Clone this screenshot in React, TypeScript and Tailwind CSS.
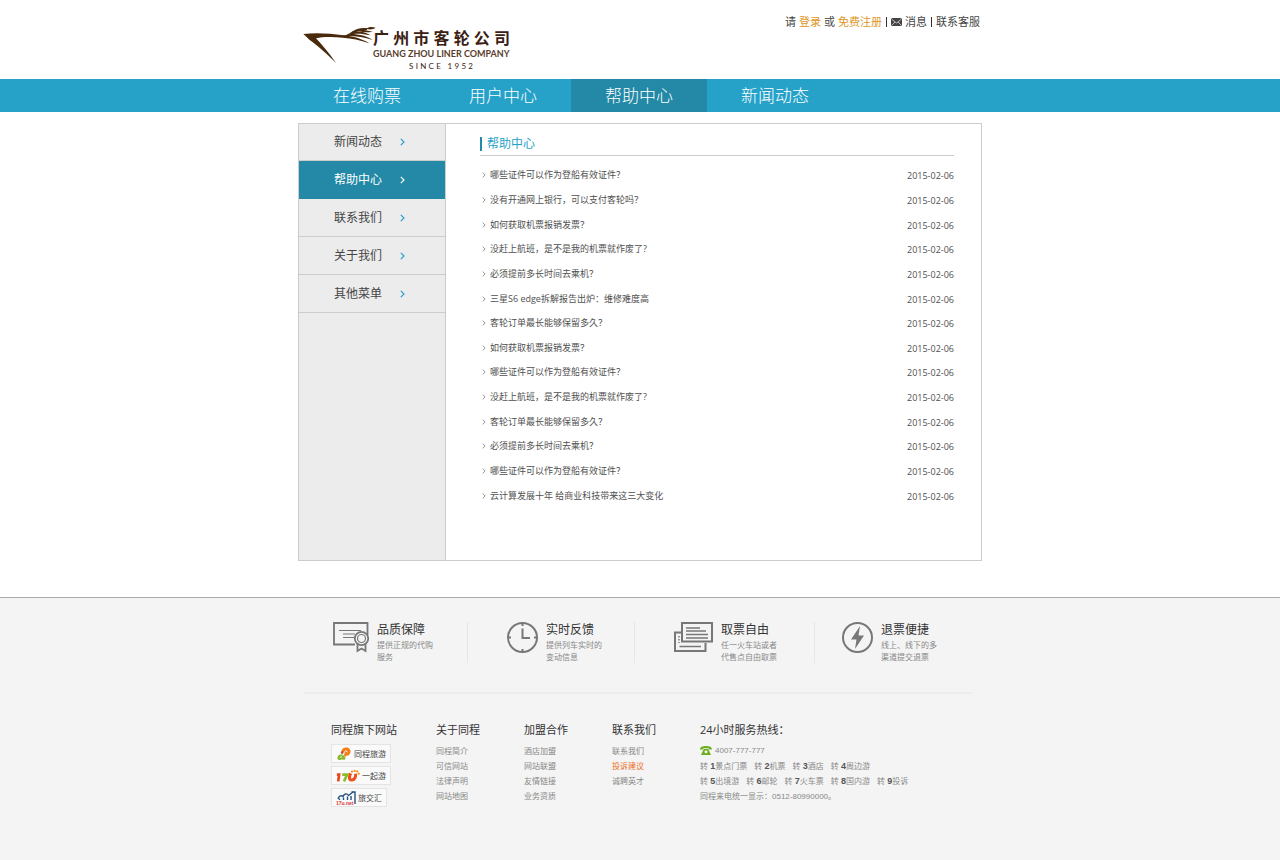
import { useState } from 'react';
import type { ReactNode } from 'react';

const NAV = ['在线购票', '用户中心', '帮助中心', '新闻动态'];

const SIDE_MENU = ['新闻动态', '帮助中心', '联系我们', '关于我们', '其他菜单'];

const ARTICLES = [
  '哪些证件可以作为登船有效证件？',
  '没有开通网上银行，可以支付客轮吗？',
  '如何获取机票报销发票？',
  '没赶上航班，是不是我的机票就作废了?',
  '必须提前多长时间去乘机？',
  '三星S6 edge拆解报告出炉：维修难度高',
  '客轮订单最长能够保留多久？',
  '如何获取机票报销发票？',
  '哪些证件可以作为登船有效证件？',
  '没赶上航班，是不是我的机票就作废了?',
  '客轮订单最长能够保留多久？',
  '必须提前多长时间去乘机？',
  '哪些证件可以作为登船有效证件？',
  '云计算发展十年 给商业科技带来这三大变化',
].map((title) => ({ title, date: '2015-02-06' }));

const LINK_COLUMNS = [
  { title: '关于同程', links: ['同程简介', '可信网站', '法律声明', '网站地图'] },
  { title: '加盟合作', links: ['酒店加盟', '网站联盟', '友情链接', '业务资质'] },
  { title: '联系我们', links: ['联系我们', '投诉建议', '诚聘英才'] },
];

const HOTLINE = [
  [['1', '景点门票'], ['2', '机票'], ['3', '酒店'], ['4', '周边游']],
  [['5', '出境游'], ['6', '邮轮'], ['7', '火车票'], ['8', '国内游'], ['9', '投诉']],
];

function Chevron({ className }: { className: string }) {
  return (
    <svg viewBox="0 0 5 8" fill="none" stroke="currentColor" strokeWidth="1.2" className={className}>
      <path d="M0.8 0.8 4 4 0.8 7.2" />
    </svg>
  );
}

function Spread({ text, className }: { text: string; className: string }) {
  return (
    <span className={`flex justify-between ${className}`}>
      {Array.from(text).map((c, i) => <span key={i} className="whitespace-pre">{c}</span>)}
    </span>
  );
}

function Logo() {
  return (
    <a href="#" className="flex text-[#3b2113]">
      <svg viewBox="36 50 213 114" className="h-[38px] w-[71px] overflow-visible" fill="#4a2a0c">
        <path d="M40 74C75 70 120 72 160 78 190 81 215 88 238 102 210 92 185 87 158 85 125 82 95 83 78 87 95 106 118 131 138 161 112 134 82 108 58 91 52 85 46 80 40 74Z" />
        <path d="M156 80C172 78 178 72 188 66 202 57 216 55 232 57L231 62C216 61 206 63 198 68 186 77 176 84 164 83Z" />
        <path d="M186 67C204 64 224 67 242 78 222 74 206 72 190 74Z" />
        <path d="M178 74C204 73 232 80 248 92 228 86 206 81 182 80Z" />
        <path d="M208 60C220 62 234 64 248 67 232 70 220 69 206 65Z" />
        <path d="M229 58C236 51 248 52 257 55 250 60 240 62 229 58Z" />
      </svg>
      <span className="flex w-[137px] flex-col">
        <Spread text="广州市客轮公司" className="text-[16px] leading-6 font-bold" />
        <span className="font-['Lato'] text-[9px] leading-[8px] font-bold whitespace-nowrap text-[#5a3d2c]">GUANG ZHOU LINER COMPANY</span>
        <Spread text="SINCE 1952" className="mt-[3px] ml-9 w-16 font-['Lato'] text-[8px] leading-[10px]" />
      </span>
    </a>
  );
}

function CertificateIcon() {
  return (
    <svg viewBox="0 0 36 31" className="h-[31px] w-[36px]" fill="none" stroke="#777" strokeWidth="1.8">
      <path d="M22 22.5H1V1H34.5V13" />
      <path d="M6 8.5H28M10 12H22M10 15.5H21" strokeWidth="1.2" />
      <circle cx="28.5" cy="16.5" r="6.7" />
      <circle cx="28.5" cy="16.5" r="4" strokeWidth="1.2" />
      <path d="M24.5 22V29L28.5 26.5 32.5 29V22" />
    </svg>
  );
}

function ClockIcon() {
  return (
    <svg viewBox="0 0 31 31" className="size-[31px]" fill="none" stroke="#777" strokeWidth="2">
      <circle cx="15.5" cy="15.5" r="14.5" />
      <path d="M15.5 6.5V16H23M15.5 1V4M15.5 27V30M1 15.5H4M27 15.5H30" />
    </svg>
  );
}

function TicketIcon() {
  return (
    <svg viewBox="0 0 39 31" className="h-[31px] w-[39px]" fill="none" stroke="#777" strokeWidth="2">
      <path d="M8 10.5H1V29H31.5V21" />
      <rect x="8" y="1" width="30" height="18.5" />
      <path d="M12 6H26M12 9H32M12 12.5H34M12 16H34M5.5 24.5H27" strokeWidth="1.3" />
      <path d="M5 14V21" strokeWidth="1.5" strokeDasharray="1.5 1.5" />
    </svg>
  );
}

function RefundIcon() {
  return (
    <svg viewBox="0 0 31 31" className="size-[31px]" fill="none" stroke="#777" strokeWidth="2">
      <circle cx="15.5" cy="15.5" r="14.5" />
      <path d="M18 4 9 17.5H14.500L13 27 22 13.5H16.500Z" fill="#777" stroke="none" />
    </svg>
  );
}

const FEATURES: { title: string; lines: string[]; icon: ReactNode; pad: string }[] = [
  { title: '品质保障', lines: ['提供正规的代购', '服务'], icon: <CertificateIcon />, pad: 'pl-[29px]' },
  { title: '实时反馈', lines: ['提供列车实时的', '变动信息'], icon: <ClockIcon />, pad: 'pl-[39px]' },
  { title: '取票自由', lines: ['任一火车站或者', '代售点自由取票'], icon: <TicketIcon />, pad: 'pl-[39px]' },
  { title: '退票便捷', lines: ['线上、线下的多', '渠道提交退票'], icon: <RefundIcon />, pad: 'pl-[27px]' },
];

const SITES = [
  {
    name: '同程旅游',
    icon: (
      <svg viewBox="0 0 16 14" className="h-[14px] w-4">
        <path d="M5.5 4C6 1 9 0 11 .5 14 1 15.500 4 14 6.500 13 8.500 11.500 9 10.500 8.500 10 10 8.500 10 8 8.500L8.500 5.500Z" fill="#f07f1c" />
        <path d="M5.500 4C4 5.500 5 7.500 7 7L8.500 4.500Z" fill="#c9502c" />
        <path d="M6.500 7.500C3 7 1 9 1.500 11.500 2 13.500 5 13.500 6 12 7 13.500 9.500 13 9.500 11L8 8.500Z" fill="#8ab82c" />
        <path d="M9 3.500 11.500 5M8.500 4.500 7 8.500M4 10.500 6 9.500" stroke="#fff" strokeWidth="0.900" />
      </svg>
    ),
  },
  {
    name: '一起游',
    icon: (
      <svg viewBox="0 0 27 14" className="h-[14px] w-6" fill="none" strokeWidth="3">
        <path d="M1 5.500H3.500L2.500 13" stroke="#e8471c" />
        <path d="M7 5.500H12.500L9 13" stroke="#8cbf26" />
        <path d="M16.500 4C14 9 15 12 18 11.500 21 11 22.500 8 22 4.500" stroke="#f0501c" strokeWidth="3.500" />
        <g fill="#f0901c">
          <circle cx="18" cy="2" r="1.300" />
          <circle cx="21" cy="1.300" r="1.300" />
          <circle cx="24" cy="1.800" r="1.300" />
          <circle cx="25.700" cy="4.500" r="1.200" />
        </g>
      </svg>
    ),
  },
  {
    name: '旅交汇',
    icon: (
      <svg viewBox="0 0 20 14" className="h-[14px] w-5" fill="none" stroke="#24527f" strokeWidth="1.400">
        <path d="M2 8C3 4.500 5.500 4 7 5.500 8 2.500 11 2 12.500 4.500 14 3.500 15.500 2 17 1" />
        <path d="M3.500 9V7.500M7.500 9V6.500M11.500 9V5.500M15 9V5M15.500 1H19V13" />
        <text x="0" y="13.500" fill="#d83a3a" stroke="none" className="font-['Liberation_Sans'] text-[5px] font-bold">17u.net</text>
      </svg>
    ),
  },
];

export default function App() {
  const [section, setSection] = useState('帮助中心');

  return (
    <div className="flex min-h-screen flex-col bg-white font-['Open_Sans','Noto_Sans_CJK_SC',sans-serif] text-[#444]">
      <header className="mx-auto flex h-[79px] w-full max-w-[684px] items-start justify-between pr-0.5 pl-1">
        <div className="pt-[26px]">
          <Logo />
        </div>
        <div className="flex items-center gap-[3px] pt-[14px] text-[11px] leading-4">
          <span>请</span>
          <a href="#" className="text-[#e0951e]">登录</a>
          <span>或</span>
          <a href="#" className="text-[#e0951e]">免费注册</a>
          <span className="mx-px h-[10px] w-px bg-[#333]" />
          <a href="#" className="flex items-center gap-[3px]">
            <svg viewBox="0 0 11 8" className="h-2 w-[11px]">
              <rect width="11" height="8" rx="1.5" fill="#444" />
              <path d="M1 1.5 5.5 5 10 1.5M1 7 4 4M10 7 7 4" fill="none" stroke="#ddd" strokeWidth="0.8" />
            </svg>
            消息
          </a>
          <span className="mx-px h-[10px] w-px bg-[#333]" />
          <a href="#">联系客服</a>
        </div>
      </header>

      <nav className="bg-[#26a2c9]">
        <div className="mx-auto flex w-full max-w-[684px] pl-px">
          {NAV.map((n) => (
            <a
              key={n}
              href="#"
              className={`w-[136px] text-center text-[17px] leading-[33px] font-light text-white ${n === '帮助中心' ? 'bg-[#2389a6]' : ''}`}
            >
              {n}
            </a>
          ))}
        </div>
      </nav>

      <main className="mx-auto mt-[11px] flex min-h-[438px] w-full max-w-[684px] border border-[#ccc]">
        <aside className="w-[147px] shrink-0 border-r border-[#ccc] bg-[#ececec]">
          {SIDE_MENU.map((m) => (
            <button
              key={m}
              onClick={() => setSection(m)}
              className={`flex h-[38px] w-full items-center border-b pl-[35px] text-[12px] first:h-[37px] ${m === section ? 'border-[#2389a6] bg-[#2389a6] text-white' : 'border-[#ccc]'}`}
            >
              <span className="w-[66px] text-left">{m}</span>
              <Chevron className={`h-2 w-[5px] ${m === section ? 'text-white' : 'text-[#26a2c9]'}`} />
            </button>
          ))}
        </aside>

        <section className="flex-1 pr-[27px] pl-[34px]">
          <div className="flex h-8 items-center border-b border-[#ccc] pt-2">
            <h1 className="flex items-center gap-[5px] text-[12px] leading-4 text-[#26a2c9]">
              <span className="h-[14px] w-0.5 bg-[#2389a6]" />
              帮助中心
            </h1>
          </div>
          <ul className="mt-[7px] grid h-[345px] auto-rows-fr">
            {ARTICLES.map((a, i) => (
              <li key={i} className="flex items-center justify-between text-[9px] leading-3 text-[#505050]">
                <a href="#" className="flex items-center gap-1 pl-0.5">
                  <Chevron className="h-[6px] w-1 text-[#888]" />
                  {a.title}
                </a>
                <time className="pt-0.5">{a.date}</time>
              </li>
            ))}
          </ul>
        </section>
      </main>

      <footer className="mt-9 flex-1 border-t border-[#aaa] bg-[#f4f4f4]">
        <div className="mx-auto w-full max-w-[684px] pr-2.5 pl-1.5">
          <div className="grid grid-cols-[164px_167px_180px_1fr] border-b-2 border-[#ececec] pt-6 pb-[29px]">
            {FEATURES.map((f, i) => (
              <div key={f.title} className={`flex gap-2 ${f.pad} ${i < 3 ? 'border-r border-[#e6e6e6]' : ''}`}>
                <div className="shrink-0">{f.icon}</div>
                <div>
                  <h2 className="text-[12px] leading-4 text-[#333]">{f.title}</h2>
                  <p className="mt-px text-[8px] leading-3 text-[#888]">
                    {f.lines.map((l) => <span key={l} className="block">{l}</span>)}
                  </p>
                </div>
              </div>
            ))}
          </div>

          <div className="grid grid-cols-[105px_88px_88px_88px_1fr] pt-7 pl-[27px] text-[8px] leading-[15px] text-[#888]">
            <div>
              <h3 className="text-[11px] leading-4 text-[#333]">同程旗下网站</h3>
              <div className="mt-1.5 flex flex-col items-start gap-[3px]">
                {SITES.map((s) => (
                  <a key={s.name} href="#" className="flex h-[19px] items-center gap-0.5 border border-[#e4e4e4] bg-[#fafafa] px-1 text-[#444]">
                    {s.icon}
                    {s.name}
                  </a>
                ))}
              </div>
            </div>
            {LINK_COLUMNS.map((c) => (
              <div key={c.title}>
                <h3 className="text-[11px] leading-4 text-[#333]">{c.title}</h3>
                <ul className="mt-[5px]">
                  {c.links.map((l) => (
                    <li key={l}>
                      <a href="#" className={l === '投诉建议' ? 'text-[#ee6a1c]' : ''}>{l}</a>
                    </li>
                  ))}
                </ul>
              </div>
            ))}
            <div className="font-['Liberation_Sans','Noto_Sans_CJK_SC',sans-serif]">
              <h3 className="font-['Open_Sans','Noto_Sans_CJK_SC',sans-serif] text-[11px] leading-4 text-[#333]">24小时服务热线：</h3>
              <p className="mt-[5px] mb-px flex items-center gap-[3px]">
                <svg viewBox="0 0 12 9" className="h-[9px] w-3" fill="#6cae1e">
                  <path d="M0 3.5C0 1 2.5 0 6 0S12 1 12 3.5H8.800V2.200H3.200V3.500Z" />
                  <path d="M3.8 3H8.200L11 9H1Z" />
                  <circle cx="6" cy="5.8" r="1.5" fill="#f4f4f4" />
                </svg>
                4007-777-777
              </p>
              {HOTLINE.map((row, i) => (
                <p key={i} className="flex gap-[7px] whitespace-nowrap">
                  {row.map(([num, label]) => (
                    <span key={num}>
                      转 <b className="text-[9px] text-[#555]">{num}</b>{label}
                    </span>
                  ))}
                </p>
              ))}
              <p>同程来电统一显示：0512-80990000。</p>
            </div>
          </div>
        </div>
      </footer>
    </div>
  );
}
